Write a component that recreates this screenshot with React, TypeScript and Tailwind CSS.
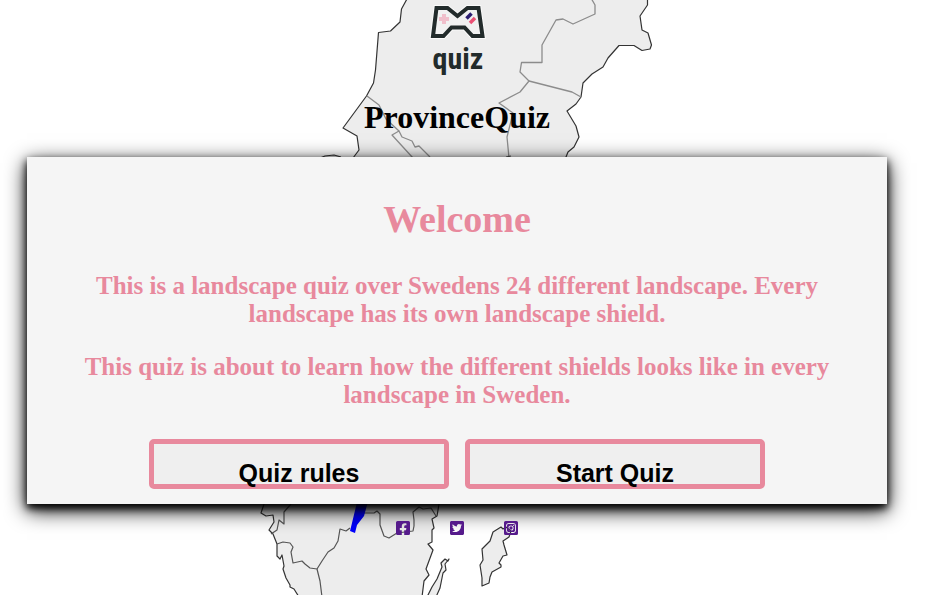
import { FaFacebookSquare, FaInstagramSquare, FaTwitterSquare } from "react-icons/fa";

const serif = "font-['Liberation_Serif','Times_New_Roman',serif]";
const sans = "font-['Liberation_Sans',Arial,sans-serif]";

function ProvinceMap() {
  return (
    <svg
      aria-hidden="true"
      className="absolute inset-0 -z-10 h-full w-full"
      viewBox="0 0 925 595"
      preserveAspectRatio="xMidYMid slice"
      fill="none"
      stroke="#333333"
      strokeWidth="1.2"
      strokeLinejoin="round"
    >
      <g fill="#ededed">
        <path d="M407.500 -2L401.500 9L400 22L390.500 31L378.500 32.500L375.500 70L373.500 83L366.500 96L343 128L357 136L359 150L353 158L300 300L264 504L261 513L266 516L273 515L274 522L269 530L273 534L277 544V556L280 559L282 555L284 566L283 569L286 578L290 585V587L294 589L299 597H422L424 581L429 575L426 569L433 550L428 544L432 542V530L434 528L432 519L437 516L439 504L566 157L568 152L574 147L579 137L576 126L567 111L576 104L581 97L583 83L592 74L603 67L608 58L619 45.500H634L642 50.500L650 49L651.500 45L648 33L642 30L640 16L647.500 5V-2Z" />
        <path d="M320 158L325 156L334 155L341 157" />
        <path d="M427 597L432 587L437 579L442 567L441 563L445 559L448 561L449 559L445 564L446 570L443 573L440 588L436 597Z" />
        <path d="M501 527L493 532L490 541L482 549L483 560L480 565L482 578L482 586L489 583L490 577L492 572L501 567V565L499 563L503 556L507 555L504 545L503 541L509 537L511 531L506 527L503 529Z" />
      </g>
      <g stroke="#8c8c8c" strokeWidth="1.300">
        <path d="M591 -2L595 5V14L573 24L563 19L556 20L542 45V62.500H521.500L520 72L529 81L520 92L499 103L513 113L507 137L509 158" />
        <path d="M529 81L572 92L581 97" />
        <path d="M367 96L379 105L386 119L399 131L392 135L413 158M399 131L402 137L412 141L415 147L419 146L430 157" />
      </g>
      <g stroke="#555555">
        <path d="M291 504L284 512L284 524L279 520L277 530L271 534" />
        <path d="M277 544L283 542L290 543L293 547L291 552L293 563L302 561L305 564L310 568L317 569L320 581L322 597" />
        <path d="M317 569L322 561L328 552L334 548L338 541L340 529L346 531L350 528" />
        <path d="M363 513H374L377 511L380 514V525L384 536L389 538L397 533L413 531L414 526V520L413 512L419 507L423 509L431 508L436 516" />
        <path d="M506 157L511 156" />
      </g>
      <path fill="#0000ff" stroke="none" d="M358 498L352 523L350 531L355 533L357 525L364 516L369 498Z" />
    </svg>
  );
}

function Logo() {
  return (
    <svg className="h-19 w-19" viewBox="0 0 76 76" role="img" aria-label="Quiz logo">
      <path
        d="M17.500 8H28.500L38.500 16L48.500 8H59.500L63.500 36H53.500L45.500 27.500H32.500L24.500 36H14Z"
        fill="#f1f1f1"
        stroke="#fafafa"
        strokeWidth="6"
      />
      <path
        d="M17.500 8H28.500L38.500 16L48.500 8H59.500L63.500 36H53.500L45.500 27.500H32.500L24.500 36H14Z"
        fill="#f1f1f1"
        stroke="#222b2b"
        strokeWidth="4"
      />
      <path d="M25 14V24M20 19H30" stroke="#f0bfcb" strokeWidth="4" />
      <path d="M47.500 18.500L52.500 13.500" stroke="#2b1d70" strokeWidth="3.500" />
      <path d="M51 23L56 18" stroke="#eb5175" strokeWidth="3.500" />
      <text
        x="39"
        y="69"
        textAnchor="middle"
        className="fill-[#222b2b] font-['Liberation_Sans_Narrow','Roboto_Condensed','Roboto',sans-serif] text-[30px] font-bold"
      >
        quiz
      </text>
    </svg>
  );
}

const actions = ["Quiz rules", "Start Quiz"];

const links = [
  { name: "Facebook", Icon: FaFacebookSquare },
  { name: "Twitter", Icon: FaTwitterSquare },
  { name: "Instagram", Icon: FaInstagramSquare },
];

export default function App() {
  return (
    <div className={`relative isolate min-h-screen overflow-hidden bg-white pr-[38px] pl-[27px] ${serif}`}>
      <ProvinceMap />
      <header className="flex flex-col items-center pb-[21px]">
        <Logo />
        <h1 className="mt-[23px] text-[32px] leading-[37px] font-bold text-black">ProvinceQuiz</h1>
      </header>

      <main className="bg-[#f5f5f5] px-12 pt-10 pb-[15px] text-center font-bold text-[#e8899d] shadow-[0_4px_8px_0_#000,0_6px_20px_0_#000]">
        <h2 className="text-[38px] leading-[44px]">Welcome</h2>
        <p className="mt-[31px] text-[25px] leading-[28px]">
          This is a landscape quiz over Swedens 24 different landscape. Every landscape has its own landscape shield.
        </p>
        <p className="mt-[25px] text-[25px] leading-[28px]">
          This quiz is about to learn how the different shields looks like in every landscape in Sweden.
        </p>
        <div className="mt-[30px] flex flex-wrap justify-center gap-4">
          {actions.map((label) => (
            <button
              key={label}
              type="button"
              className={`h-[50px] w-[300px] rounded-[5px] border-5 border-[#e8899d] bg-[#efefef] pt-[15px] text-[25px] leading-[28px] font-bold text-black ${sans}`}
            >
              {label}
            </button>
          ))}
        </div>
      </main>

      <footer className="mt-4 flex justify-center gap-10">
        {links.map(({ name, Icon }) => (
          <a key={name} href="#" aria-label={name} className="text-[#551a8b]">
            <Icon className="h-4 w-[14px]" />
          </a>
        ))}
      </footer>
    </div>
  );
}
